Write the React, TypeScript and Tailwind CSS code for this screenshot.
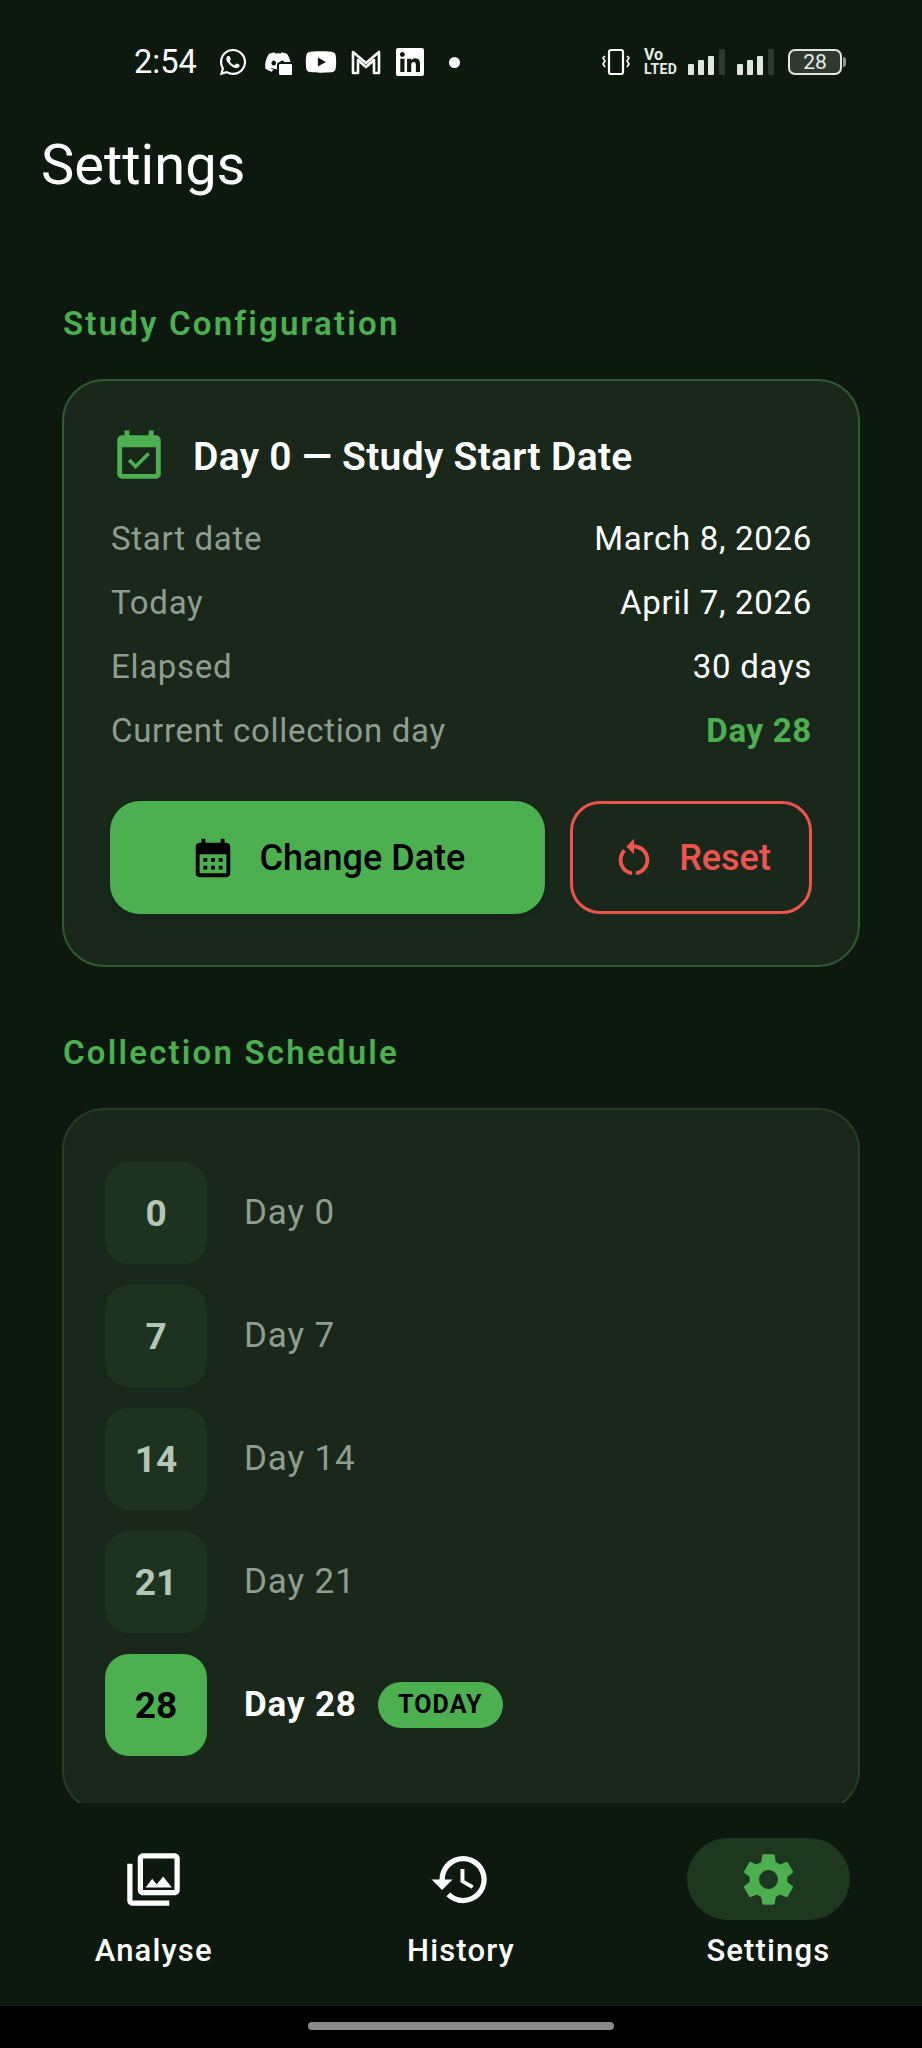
import { FaDiscord, FaLinkedin, FaWhatsapp, FaYoutube } from "react-icons/fa";
import {
  MdCalendarMonth,
  MdEventAvailable,
  MdHistory,
  MdOutlinePhotoLibrary,
  MdRestartAlt,
  MdSettings,
} from "react-icons/md";

const infoRows = [
  { label: "Start date", value: "March 8, 2026" },
  { label: "Today", value: "April 7, 2026" },
  { label: "Elapsed", value: "30 days" },
];

const scheduleDays = [0, 7, 14, 21];

function SignalBars() {
  return (
    <svg width="38" height="26" viewBox="0 0 38 26" fill="none">
      <rect x="0" y="15" width="6" height="11" rx="1" fill="#dfe5df" />
      <rect x="10" y="11" width="6" height="15" rx="1" fill="#dfe5df" />
      <rect x="20" y="7" width="6" height="19" rx="1" fill="#dfe5df" />
      <rect x="31" y="0" width="6" height="26" rx="1" fill="#2d382e" />
    </svg>
  );
}

function StatusBar() {
  return (
    <div className="flex h-[92px] shrink-0 items-center justify-between pt-[32px] pl-[134px] pr-[76px] text-white">
      <div className="flex items-center">
        <span className="w-[84px] text-[32.5px] leading-none">2:54</span>
        <FaWhatsapp size={30} />
        <div className="relative ml-[16px] h-[28px] w-[28px]">
          <FaDiscord size={28} />
          <span className="absolute right-[-2px] bottom-[-1px] h-[15px] w-[17px] rounded-[3px] border-[2px] border-[#0d190f] bg-white" />
        </div>
        <FaYoutube size={32} className="ml-[13px]" />
        <svg width="30" height="26" viewBox="0 0 30 26" fill="none" className="ml-[14px]" stroke="white" strokeWidth="2.6" strokeLinejoin="round">
          <path d="M2 24V3l13 11L28 3v21h-5V11l-8 7-8-7v13z" />
        </svg>
        <FaLinkedin size={32} className="ml-[13px]" />
        <span className="ml-[23px] h-[11px] w-[11px] rounded-full bg-white" />
      </div>
      <div className="flex items-center">
        <svg width="28" height="28" viewBox="0 0 28 28" fill="none" stroke="white" strokeWidth="2.2">
          <rect x="7" y="2" width="14" height="24" rx="2" />
          <path d="M3 8l-2 2 2 3-2 3 2 3M25 8l2 2-2 3 2 3-2 3" strokeWidth="1.6" />
        </svg>
        <div className="ml-[14px] flex w-[30px] flex-col font-bold text-[#e6ebe6]">
          <span className="text-[16px] leading-[14px]">Vo</span>
          <span className="text-[14px] leading-[14px] tracking-[0.4px]">LTED</span>
        </div>
        <div className="ml-[14px]">
          <SignalBars />
        </div>
        <div className="ml-[11px]">
          <SignalBars />
        </div>
        <div className="ml-[13px] flex items-center">
          <div className="flex h-[26px] w-[54px] items-center justify-center rounded-[7px] border-2 border-[#dfe5df] bg-[#2e3a30] text-[21px] leading-none text-[#e8ece8]">
            28
          </div>
          <span className="ml-[1px] h-[10px] w-[3px] rounded-r-sm bg-[#8d958d]" />
        </div>
      </div>
    </div>
  );
}

function SectionTitle({ children }: { children: string }) {
  return <h2 className="pl-[1px] text-[33px] font-semibold leading-[36px] tracking-[2.2px] text-[#4caf50]">{children}</h2>;
}

function StudyCard() {
  return (
    <div className="mt-[37px] rounded-[42px] border-2 border-[#2f5a30] bg-[#1a281b] pt-[47px] pb-[51px] pl-[46px] pr-[46px]">
      <div className="flex items-center">
        <MdEventAvailable size={58} className="text-[#4caf50]" />
        <span className="ml-[25px] text-[39px] font-semibold tracking-[0.3px] text-white">Day 0 — Study Start Date</span>
      </div>
      <div className="mt-[20px] flex flex-col pl-[1px]">
        {infoRows.map(row => (
          <div key={row.label} className="flex h-[64px] items-center justify-between text-[33px] tracking-[0.7px]">
            <span className="text-[#8d9e8f]">{row.label}</span>
            <span className="text-white">{row.value}</span>
          </div>
        ))}
        <div className="flex h-[64px] items-center justify-between text-[33px] tracking-[0.7px]">
          <span className="text-[#8d9e8f]">Current collection day</span>
          <span className="font-bold text-[#4caf50]">Day 28</span>
        </div>
      </div>
      <div className="mt-[38px] flex gap-[25px]">
        <button className="flex h-[113px] w-[435px] items-center justify-center gap-[24px] rounded-[30px] bg-[#4caf50] pt-[2px] text-[36px] font-medium text-black shadow-md">
          <MdCalendarMonth size={46} />
          Change Date
        </button>
        <button className="flex h-[113px] flex-1 items-center justify-center gap-[22px] rounded-[30px] border-[3px] border-[#ef5350] pt-[2px] text-[36px] font-medium text-[#ef5350]">
          <MdRestartAlt size={46} />
          Reset
        </button>
      </div>
    </div>
  );
}

function ScheduleCard() {
  return (
    <div className="mt-[37px] rounded-[42px] border-2 border-[#263d28] bg-[#1a281b] pt-[52px] pb-[54px] pl-[41px] pr-[41px]">
      <div className="flex flex-col gap-[21px]">
        {scheduleDays.map(day => (
          <div key={day} className="flex items-center">
            <div className="flex h-[102px] w-[102px] items-center justify-center rounded-[24px] bg-[#1e331f] pt-[2px] text-[37px] font-bold text-[#b4c6b5]">
              {day}
            </div>
            <span className="ml-[37px] pt-[2px] text-[35px] tracking-[0.85px] text-[#8d9e8f]">Day {day}</span>
          </div>
        ))}
        <div className="flex items-center">
          <div className="flex h-[102px] w-[102px] items-center justify-center rounded-[24px] bg-[#4caf50] pt-[2px] text-[37px] font-bold text-black">
            28
          </div>
          <span className="ml-[37px] pt-[2px] text-[35px] font-bold tracking-[0.85px] text-white">Day 28</span>
          <span className="ml-[21px] flex h-[46px] w-[125px] items-center justify-center rounded-full bg-[#4caf50] text-[25px] font-bold tracking-[1.1px] text-black">
            TODAY
          </span>
        </div>
      </div>
    </div>
  );
}

function NavBar() {
  return (
    <nav className="grid h-[203px] shrink-0 grid-cols-3 bg-[#0d190f] text-white">
      <div className="flex flex-col items-center pt-[35px]">
        <div className="flex h-[82px] w-[163px] items-center justify-center">
          <MdOutlinePhotoLibrary size={63} />
        </div>
        <span className="mt-[11px] text-[31px] font-medium leading-[40px] tracking-[1.15px]">Analyse</span>
      </div>
      <div className="flex flex-col items-center pt-[35px]">
        <div className="flex h-[82px] w-[163px] items-center justify-center">
          <MdHistory size={63} />
        </div>
        <span className="mt-[11px] text-[31px] font-medium leading-[40px] tracking-[1.15px]">History</span>
      </div>
      <div className="flex flex-col items-center pt-[35px]">
        <div className="flex h-[82px] w-[163px] items-center justify-center rounded-full bg-[#1e381f]">
          <MdSettings size={63} className="text-[#4caf50]" />
        </div>
        <span className="mt-[11px] text-[31px] font-medium leading-[40px] tracking-[1.15px]">Settings</span>
      </div>
    </nav>
  );
}

export default function App() {
  return (
    <div className="flex h-[2048px] w-[922px] flex-col overflow-hidden bg-[#0d190f] font-['Roboto',sans-serif]">
      <StatusBar />
      <h1 className="mt-[40px] pl-[41px] text-[56px] leading-[66px] text-white">Settings</h1>
      <main className="min-h-0 flex-1 overflow-hidden px-[62px] pt-[108px]">
        <SectionTitle>Study Configuration</SectionTitle>
        <StudyCard />
        <div className="mt-[68px]">
          <SectionTitle>Collection Schedule</SectionTitle>
        </div>
        <ScheduleCard />
      </main>
      <NavBar />
      <div className="flex h-[42px] shrink-0 justify-center bg-black pt-[16px]">
        <span className="h-[8px] w-[306px] rounded-full bg-[#8a8a8a]" />
      </div>
    </div>
  );
}
